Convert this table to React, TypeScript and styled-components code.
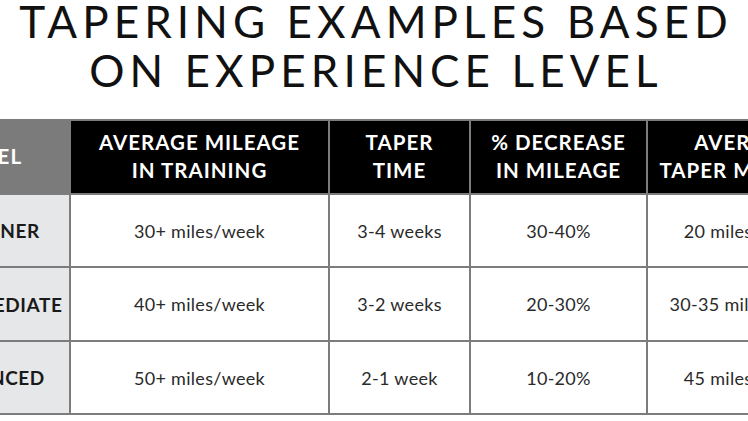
import React from "react";
import styled, { createGlobalStyle } from "styled-components";

const Global = createGlobalStyle`
  html, body { margin: 0; padding: 0; background: #fff; }
  body { overflow: hidden; width: 748px; height: 421px; }
`;

const Page = styled.div`
  width: 748px;
  height: 421px;
  overflow: hidden;
  display: flex;
  flex-direction: column;
  align-items: stretch;
`;

const Title = styled.h1`
  margin: -3px 0 0 0;
  font-family: "Lato", "Liberation Sans", sans-serif;
  font-weight: 400;
  font-size: 44px;
  line-height: 49px;
  letter-spacing: 5.1px;
  text-align: center;
  color: #111;
  height: 122px;
  padding-left: 4px;
`;

const Grid = styled.div`
  margin-left: -91px;
  width: 931px;
  display: grid;
  grid-template-columns: 158px 257px 139px 175px 192px;
  grid-template-rows: 72px 71px 72px 71px;
  gap: 2px;
  padding: 2px;
  background: #7c7c7c;
  flex-shrink: 0;
`;

const HeadCell = styled.div<{ $first?: boolean }>`
  background: ${(p) => (p.$first ? "#7b7b7b" : "#000")};
  color: #fff;
  font-family: "Lato", "Liberation Sans", sans-serif;
  font-weight: 700;
  font-size: 20.5px;
  letter-spacing: 1px;
  line-height: 28px;
  display: flex;
  align-items: center;
  justify-content: center;
  text-align: center;
  white-space: nowrap;
  padding-bottom: 3px;
`;

const LevelCell = styled.div`
  background: #e6e7e9;
  color: #1a1a1a;
  font-family: "Lato", "Liberation Sans", sans-serif;
  font-weight: 700;
  font-size: 19px;
  letter-spacing: 0.6px;
  display: flex;
  align-items: center;
  justify-content: center;
`;

const Cell = styled.div`
  background: #fff;
  color: #2a2a2a;
  font-family: "Lato", "Liberation Sans", sans-serif;
  font-weight: 400;
  font-size: 18px;
  letter-spacing: 0.3px;
  display: flex;
  align-items: center;
  justify-content: center;
  white-space: nowrap;
`;

const headers: string[][] = [
  ["LEVEL"],
  ["AVERAGE MILEAGE", "IN TRAINING"],
  ["TAPER", "TIME"],
  ["% DECREASE", "IN MILEAGE"],
  ["AVERAGE", "TAPER MILEAGE"],
];

const rows: string[][] = [
  ["BEGINNER", "30+ miles/week", "3-4 weeks", "30-40%", "20 miles/week"],
  ["INTERMEDIATE", "40+ miles/week", "3-2 weeks", "20-30%", "30-35 miles/week"],
  ["ADVANCED", "50+ miles/week", "2-1 week", "10-20%", "45 miles/week"],
];

export default function App() {
  return (
    <Page>
      <Global />
      <Title>
        TAPERING EXAMPLES BASED
        <br />
        ON EXPERIENCE LEVEL
      </Title>
      <Grid>
        {headers.map((h, i) => (
          <HeadCell key={i} $first={i === 0}>
            <div>
              {h.map((line, j) => (
                <div key={j}>{line}</div>
              ))}
            </div>
          </HeadCell>
        ))}
        {rows.map((r, i) => (
          <React.Fragment key={i}>
            <LevelCell>{r[0]}</LevelCell>
            {r.slice(1).map((c, j) => (
              <Cell key={j}>{c}</Cell>
            ))}
          </React.Fragment>
        ))}
      </Grid>
    </Page>
  );
}
